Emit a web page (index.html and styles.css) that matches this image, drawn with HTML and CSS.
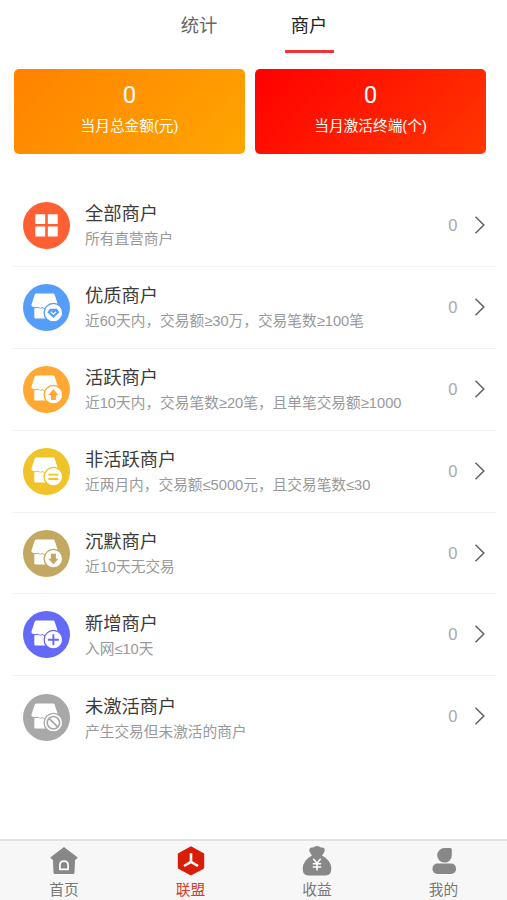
FILE: index.html
```html
<!DOCTYPE html>
<html lang="zh-CN">
<head>
<meta charset="utf-8">
<title>商户</title>
<link rel="stylesheet" href="styles.css">
</head>
<body>
<svg class="defs" aria-hidden="true">
  <symbol id="shop" viewBox="0 0 47 47">
    <path fill="#fff" d="M13.400 9.600H30q1.300 0 1.700 1.200l2.800 8.700q.4 2.900-3.500 3.200-2.700 1.600-5.500.2-2.800 2.700-6 .2-2.300 1.600-4.600-.3-3.500 1-6-.6-.6-.6-.4-1.800L11.700 10.800q.4-1.200 1.700-1.200z"/>
    <path fill="#fff" d="M11.300 24.200q2 .3 3.500-.4 2.300 1.400 4.500.2 2.800 1.900 5.700.2h5v10.300H12.300q-1 0-1-1z"/>
    <circle cx="30.400" cy="28.700" r="9.300" fill="#fff" stroke="currentColor" stroke-width="1.300"/>
  </symbol>
  <symbol id="chevron" viewBox="0 0 12 20">
    <path d="M1.500 1.700 9.800 10 1.500 18.300" fill="none" stroke="#666" stroke-width="1.600"/>
  </symbol>
</svg>
<div class="page">
  <nav class="tabs">
    <span class="tab">统计</span>
    <span class="tab active">商户</span>
  </nav>
  <section class="cards">
    <div class="card orange"><b class="amount">0</b><span>当月总金额(元)</span></div>
    <div class="card red"><b class="amount">0</b><span>当月激活终端(个)</span></div>
  </section>
  <main class="list">
    <div class="row">
      <svg class="badge all" viewBox="0 0 47 47"><path fill="#fff" d="M12.300 12.200h9.900v9.900h-9.900zM24.800 12.200h9.900v9.900h-9.900zM12.300 24.600h9.900v9.900h-9.900zM24.800 24.600h9.900v9.900h-9.900z"/></svg>
      <div class="info"><div class="name">全部商户</div><div class="desc">所有直营商户</div></div>
      <span class="count">0</span><svg class="arrow"><use href="#chevron"/></svg>
    </div>
    <div class="row">
      <svg class="badge good" viewBox="0 0 47 47"><use href="#shop"/><path fill="currentColor" d="M27 24.800h6.800l2.600 3.400-6 5.800-6-5.800z"/><path d="m27.700 27.700 2.700 2.500 2.700-2.500" fill="none" stroke="#fff" stroke-width="1.200"/></svg>
      <div class="info"><div class="name">优质商户</div><div class="desc">近60天内，交易额≥30万，交易笔数≥100笔</div></div>
      <span class="count">0</span><svg class="arrow"><use href="#chevron"/></svg>
    </div>
    <div class="row">
      <svg class="badge active-shop" viewBox="0 0 47 47"><use href="#shop"/><path fill="currentColor" d="m30.400 23.300 5.200 5.600h-2.700v5h-5v-5h-2.700z"/></svg>
      <div class="info"><div class="name">活跃商户</div><div class="desc">近10天内，交易笔数≥20笔，且单笔交易额≥1000</div></div>
      <span class="count">0</span><svg class="arrow"><use href="#chevron"/></svg>
    </div>
    <div class="row">
      <svg class="badge idle" viewBox="0 0 47 47"><use href="#shop"/><path d="M25.400 26.600h10M25.400 31h10" stroke="currentColor" stroke-width="1.900"/></svg>
      <div class="info"><div class="name">非活跃商户</div><div class="desc">近两月内，交易额≤5000元，且交易笔数≤30</div></div>
      <span class="count">0</span><svg class="arrow"><use href="#chevron"/></svg>
    </div>
    <div class="row">
      <svg class="badge silent" viewBox="0 0 47 47"><use href="#shop"/><path fill="currentColor" d="m30.400 34.300-5.200-5.600h2.700v-5h5v5h2.700z"/></svg>
      <div class="info"><div class="name">沉默商户</div><div class="desc">近10天无交易</div></div>
      <span class="count">0</span><svg class="arrow"><use href="#chevron"/></svg>
    </div>
    <div class="row">
      <svg class="badge fresh" viewBox="0 0 47 47"><use href="#shop"/><path d="M24.900 28.700h11M30.400 23.200v11" stroke="currentColor" stroke-width="1.900"/></svg>
      <div class="info"><div class="name">新增商户</div><div class="desc">入网≤10天</div></div>
      <span class="count">0</span><svg class="arrow"><use href="#chevron"/></svg>
    </div>
    <div class="row last">
      <svg class="badge inactive" viewBox="0 0 47 47"><use href="#shop"/><circle cx="30.400" cy="28.700" r="6.200" fill="none" stroke="currentColor" stroke-width="1.700"/><path d="m26 24.300 8.800 8.800" stroke="currentColor" stroke-width="1.900"/></svg>
      <div class="info"><div class="name">未激活商户</div><div class="desc">产生交易但未激活的商户</div></div>
      <span class="count">0</span><svg class="arrow"><use href="#chevron"/></svg>
    </div>
  </main>
  <footer class="bar">
    <div class="item">
      <svg viewBox="0 0 30 30"><path fill="#888" stroke="#888" stroke-linejoin="round" d="M15 1.600 28.200 11.600 26.600 13.400 25.600 13 24.900 27.500H5.100L4.400 13 3.400 13.400 1.800 11.600z"/><path d="M10.900 23.300v-4q0-4.200 4.100-4.200t4.100 4.200v4z" fill="none" stroke="#fff" stroke-width="1.700"/></svg>
      <span>首页</span>
    </div>
    <div class="item on">
      <svg viewBox="0 0 30 30"><path fill="#d81e06" stroke="#d81e06" stroke-width="2" stroke-linejoin="round" d="M15 1.500 27.200 8.200v13.600L15 28.300 2.800 21.800V8.200z"/><path d="M15 7.200v9.200M15 15.900 8 20M15 15.900 22 20" fill="none" stroke="#fff" stroke-width="2.600"/></svg>
      <span>联盟</span>
    </div>
    <div class="item">
      <svg viewBox="0 0 30 30"><path fill="#888" d="M10 9.400Q6.200 5.200 7.700 2.600 8.600 1.200 11 1.600 12.800 0 15 0t4 1.600q2.400-.4 3.300 1 1.500 2.600-2.300 6.800 9.300 4.900 9.300 13.200 0 7-5.700 7H6.400q-5.700 0-5.700-7 0-8.300 9.300-13.200z"/><path d="m11.300 12.700 3.700 4.600 3.700-4.600M15 17v7.500M10.800 17.700h8.400M10.800 21h8.400" fill="none" stroke="#fff" stroke-width="1.500"/></svg>
      <span>收益</span>
    </div>
    <div class="item">
      <svg viewBox="0 0 30 30"><path fill="#888" d="M15.500 2h5.700q1.600 0 1.600 1.600v5.600a7.300 7.300 0 1 1-7.300-7.200z"/><rect x="3.500" y="17.600" width="23.500" height="10.400" rx="4.800" fill="#888"/></svg>
      <span>我的</span>
    </div>
  </footer>
</div>
</body>
</html>
```
FILE: styles.css
```css
* { box-sizing: border-box; }
body {
  margin: 0;
  background: #fff;
  font-family: "Liberation Sans", "Noto Sans CJK SC", sans-serif;
}
.defs { position: absolute; width: 0; height: 0; }
.page {
  display: flex;
  flex-direction: column;
  height: 900px;
  overflow: hidden;
}
.tabs {
  display: flex;
  gap: 61px;
  height: 53px;
  padding-left: 174.500px;
}
.tab {
  width: 49px;
  border-bottom: 3.500px solid transparent;
  line-height: 51px;
  font-size: 18.300px;
  text-align: center;
  color: #666;
}
.tab.active { color: #222; border-color: #f03434; }
.cards {
  display: grid;
  grid-template-columns: 231px 231px;
  gap: 10px;
  padding: 16px 0 0 14px;
}
.card {
  display: flex;
  flex-direction: column;
  align-items: center;
  height: 85px;
  padding-top: 10px;
  border-radius: 5px;
  color: #fff;
  font-size: 14.700px;
  line-height: 24px;
}
.orange { background: linear-gradient(135deg, #ff8200, #ffa600); }
.red { background: linear-gradient(135deg, #ff0000, #ff3700); }
.amount {
  font-family: Roboto, sans-serif;
  font-size: 24px;
  font-weight: 400;
  line-height: 32px;
  margin-bottom: 3px;
}
.list { padding: 31px 11px 0 12px; }
.row {
  display: flex;
  align-items: center;
  height: 81.900px;
  padding: 0 10px 0 10.500px;
  border-bottom: 1.500px solid #f3f3f3;
}
.row:last-child { border-bottom-color: transparent; }
.badge {
  flex: none;
  width: 47px;
  height: 47px;
  border-radius: 50%;
  background: currentColor;
}
.all { color: #ff6033; }
.good { color: #549df8; }
.active-shop { color: #ffa934; }
.idle { color: #f0c328; }
.silent { color: #c3a861; }
.fresh { color: #6569f7; }
.inactive { color: #a8a8a8; }
.info { flex: 1; padding: 0.600px 0 0 15.500px; white-space: nowrap; }
.last .badge { margin-top: 2px; }
.last .info { padding-top: 2.500px; }
.name { font-size: 18.300px; line-height: 27px; color: #3c3c3c; }
.desc { font-size: 14.700px; line-height: 24px; color: #999; }
.count { font-size: 16.500px; color: #aaa; margin-right: 16.500px; }
.arrow { width: 12px; height: 20px; margin-top: -1px; }
.bar {
  display: grid;
  grid-template-columns: repeat(4, 126.500px);
  height: 61px;
  margin-top: auto;
  border-top: 2px solid #e2e2e2;
  background: #f7f7f7;
}
.item {
  display: flex;
  flex-direction: column;
  align-items: center;
  padding: 5px 0 0 1.500px;
  color: #777;
  font-size: 14.700px;
  line-height: 20px;
}
.item svg { width: 30px; height: 30px; flex: none; }
.item span { margin-top: 4px; }
.on { color: #d83a2c; }
```
